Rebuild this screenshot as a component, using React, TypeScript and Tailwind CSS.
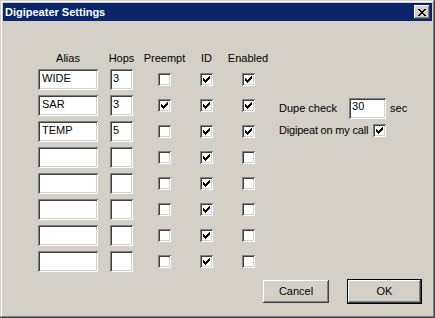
import React from "react";

const sunken =
  "shadow-[inset_1px_1px_#808080,inset_-1px_-1px_#ffffff,inset_2px_2px_#404040,inset_-2px_-2px_#d4d0c8]";
const raised =
  "shadow-[inset_-1px_-1px_#404040,inset_1px_1px_#ffffff,inset_-2px_-2px_#808080,inset_2px_2px_#d4d0c8]";

const cols = "grid grid-cols-[72px_23px_63px_21px_62px]";

const rows = [
  { alias: "WIDE", hops: "3", preempt: false, id: true, enabled: true },
  { alias: "SAR", hops: "3", preempt: true, id: true, enabled: true },
  { alias: "TEMP", hops: "5", preempt: false, id: true, enabled: true },
  { alias: "", hops: "", preempt: false, id: true, enabled: false },
  { alias: "", hops: "", preempt: false, id: true, enabled: false },
  { alias: "", hops: "", preempt: false, id: true, enabled: false },
  { alias: "", hops: "", preempt: false, id: true, enabled: false },
  { alias: "", hops: "", preempt: false, id: true, enabled: false },
];

// classic 7x7 check glyph
const checkPixels = [
  [6, 0],
  [5, 1], [6, 1],
  [0, 2], [4, 2], [5, 2], [6, 2],
  [0, 3], [1, 3], [3, 3], [4, 3], [5, 3],
  [0, 4], [1, 4], [2, 4], [3, 4], [4, 4],
  [1, 5], [2, 5], [3, 5],
  [2, 6],
];

const closePixels = [
  [0, 0], [1, 0], [6, 0], [7, 0],
  [1, 1], [2, 1], [5, 1], [6, 1],
  [2, 2], [3, 2], [4, 2], [5, 2],
  [3, 3], [4, 3],
  [2, 4], [3, 4], [4, 4], [5, 4],
  [1, 5], [2, 5], [5, 5], [6, 5],
  [0, 6], [1, 6], [6, 6], [7, 6],
];

function Check({ checked }: { checked: boolean }) {
  return (
    <span className={`flex h-[13px] w-[13px] items-start justify-start bg-white pl-[3px] pt-[3px] ${sunken}`}>
      {checked && (
        <svg width="7" height="7" viewBox="0 0 7 7" shapeRendering="crispEdges">
          {checkPixels.map(([x, y]) => (
            <rect key={`${x}-${y}`} x={x} y={y} width="1" height="1" fill="#000" />
          ))}
        </svg>
      )}
    </span>
  );
}

function Field({ value, width }: { value: string; width: string }) {
  return (
    <div className={`flex h-[21px] items-start bg-white pl-[4px] pt-[3px] text-[11px] leading-[13px] text-black ${width} ${sunken}`}>
      {value}
    </div>
  );
}

export default function App() {
  return (
    <div
      className={`flex h-[318px] w-[435px] flex-col bg-[#d4d0c8] p-[3px] font-['Liberation_Sans',Arial,sans-serif] text-[11px] leading-[13px] text-black shadow-[inset_-1px_-1px_#404040,inset_1px_1px_#d4d0c8,inset_-2px_-2px_#808080,inset_2px_2px_#ffffff]`}
    >
      {/* Title bar */}
      <div className="flex h-[18px] items-center justify-between bg-[#0a246a] pl-[2px] pr-[2px]">
        <span className="text-[11px] font-bold leading-[13px] text-white">Digipeater Settings</span>
        <span className={`flex h-[14px] w-[16px] items-center justify-center bg-[#d4d0c8] ${raised}`}>
          <svg width="8" height="7" viewBox="0 0 8 7" shapeRendering="crispEdges">
            {closePixels.map(([x, y]) => (
              <rect key={`${x}-${y}`} x={x} y={y} width="1" height="1" fill="#000" />
            ))}
          </svg>
        </span>
      </div>

      {/* Body */}
      <div className="flex pl-[35px] pt-[31px]">
        <div className="flex flex-col">
          <div className={`${cols} mb-[4px] h-[13px]`}>
            <div className="w-[60px] text-center">Alias</div>
            <div className="flex justify-center whitespace-nowrap">Hops</div>
            <div className="flex justify-center whitespace-nowrap">Preempt</div>
            <div className="flex justify-center whitespace-nowrap">ID</div>
            <div className="flex justify-center whitespace-nowrap">Enabled</div>
          </div>
          <div className="flex flex-col gap-[5px]">
            {rows.map((r, i) => (
              <div key={i} className={`${cols} h-[21px] items-center`}>
                <Field value={r.alias} width="w-[60px]" />
                <div>
                  <div className={`flex h-[21px] w-[23px] items-start bg-white pl-[3px] pt-[3px] ${sunken}`}>{r.hops}</div>
                </div>
                <div className="flex justify-center">
                  <Check checked={r.preempt} />
                </div>
                <div className="flex justify-center">
                  <Check checked={r.id} />
                </div>
                <div className="flex justify-center">
                  <Check checked={r.enabled} />
                </div>
              </div>
            ))}
          </div>
        </div>

        <div className="mt-[46px] flex flex-col">
          <div className="flex h-[21px] items-center">
            <span>Dupe check</span>
            <div className={`ml-[12px] flex h-[21px] w-[37px] items-start bg-white pl-[3px] pt-[2px] ${sunken}`}>30</div>
            <span className="ml-[4px]">sec</span>
          </div>
          <div className="mt-[5px] flex h-[13px] items-center">
            <span className="whitespace-nowrap tracking-[-0.2px]">Digipeat on my call</span>
            <span className="ml-[5px]">
              <Check checked={true} />
            </span>
          </div>
        </div>
      </div>

      {/* Buttons */}
      <div className="mt-auto flex items-center justify-end gap-[18px] pb-[11px] pr-[10px]">
        <button className={`flex h-[23px] w-[66px] items-center justify-center bg-[#d4d0c8] ${raised}`}>Cancel</button>
        <button className="h-[25px] w-[75px] border border-black bg-[#d4d0c8]">
          <span className={`flex h-full w-full items-center justify-center ${raised}`}>OK</span>
        </button>
      </div>
    </div>
  );
}
